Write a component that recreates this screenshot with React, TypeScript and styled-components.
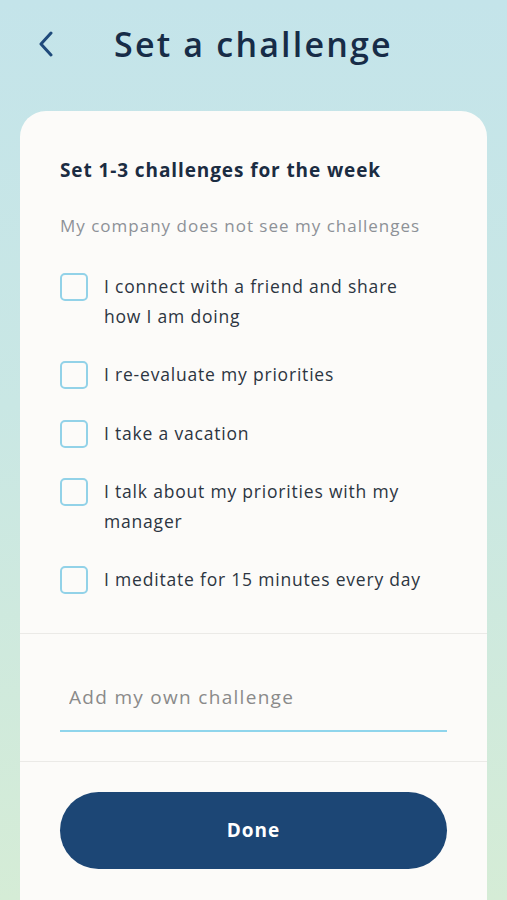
import React from 'react';
import styled, { createGlobalStyle } from 'styled-components';

const GlobalStyle = createGlobalStyle`
  html, body {
    margin: 0;
    padding: 0;
  }
  body {
    font-family: "Open Sans", "Noto Sans", sans-serif;
    -webkit-font-smoothing: antialiased;
  }
`;

const Screen = styled.div`
  width: 507px;
  height: 900px;
  overflow: hidden;
  display: flex;
  flex-direction: column;
  background: linear-gradient(180deg, #c4e4ea 0%, #c9e7e4 45%, #d5ecd6 100%);
`;

const Header = styled.header`
  height: 111px;
  flex-shrink: 0;
  display: flex;
  align-items: flex-start;
  padding: 24px 0 0 34px;
  box-sizing: border-box;
`;

const BackButton = styled.button`
  width: 24px;
  height: 40px;
  padding: 0;
  border: none;
  background: none;
  display: flex;
  align-items: center;
  justify-content: center;
  cursor: pointer;
`;

const Title = styled.h1`
  margin: 0 0 0 56px;
  font-size: 34px;
  line-height: 40px;
  font-weight: 600;
  color: #172c47;
  letter-spacing: 2.2px;
`;

const Card = styled.main`
  flex: 1;
  margin: 0 20px;
  background: #fcfbf9;
  border-radius: 26px 26px 0 0;
  display: flex;
  flex-direction: column;
`;

const Section = styled.section`
  padding: 0 40px;
`;

const Intro = styled(Section)`
  padding-top: 47px;
  padding-bottom: 38px;
  border-bottom: 1.5px solid #ebeae7;
`;

const Heading = styled.h2`
  margin: 0;
  font-size: 19px;
  line-height: 24px;
  font-weight: 700;
  color: #1b2c42;
  letter-spacing: 0.9px;
`;

const Note = styled.p`
  margin: 33px 0 0;
  font-size: 17px;
  line-height: 22px;
  color: #8d9197;
  letter-spacing: 1px;
`;

const List = styled.ul`
  list-style: none;
  margin: 36px 0 0;
  padding: 0;
  display: flex;
  flex-direction: column;
  gap: 30px;
`;

const Item = styled.li`
  display: flex;
  align-items: flex-start;
  gap: 16px;
`;

const Box = styled.span`
  width: 28px;
  height: 28px;
  flex-shrink: 0;
  box-sizing: border-box;
  border: 2px solid #92d2e8;
  border-radius: 5px;
`;

const Label = styled.span`
  font-size: 17.5px;
  line-height: 29.5px;
  color: #2c3541;
  margin-top: -1px;
  padding-right: 24px;
  letter-spacing: 0.8px;
`;

const InputArea = styled(Section)`
  padding-top: 51px;
  padding-bottom: 29px;
  border-bottom: 1.5px solid #ebeae7;
`;

const Input = styled.input`
  width: 100%;
  box-sizing: border-box;
  border: none;
  border-bottom: 2px solid #8fd5ec;
  background: transparent;
  padding: 0 9px 21px;
  font-family: inherit;
  font-size: 19px;
  line-height: 24px;
  color: #2c3541;
  outline: none;
  letter-spacing: 1.3px;

  &::placeholder {
    color: #8a8a8a;
  }
`;

const Footer = styled(Section)`
  padding-top: 30px;
`;

const DoneButton = styled.button`
  width: 100%;
  height: 77px;
  border: none;
  border-radius: 39px;
  background: #1c4675;
  color: #ffffff;
  font-family: inherit;
  font-size: 19px;
  font-weight: 700;
  letter-spacing: 1px;
  cursor: pointer;
`;

const challenges = [
  'I connect with a friend and share how I am doing',
  'I re-evaluate my priorities',
  'I take a vacation',
  'I talk about my priorities with my manager',
  'I meditate for 15 minutes every day',
];

const App = () => {
  return (
    <>
      <GlobalStyle />
      <Screen>
        <Header>
          <BackButton aria-label="Back">
            <svg width="16" height="26" viewBox="0 0 16 26" fill="none">
              <path d="M13 2 L3 13 L13 24" stroke="#1f4a7b" strokeWidth="3" strokeLinecap="round" strokeLinejoin="round" />
            </svg>
          </BackButton>
          <Title>Set a challenge</Title>
        </Header>
        <Card>
          <Intro>
            <Heading>Set 1-3 challenges for the week</Heading>
            <Note>My company does not see my challenges</Note>
            <List>
              {challenges.map((c) => (
                <Item key={c}>
                  <Box />
                  <Label>{c}</Label>
                </Item>
              ))}
            </List>
          </Intro>
          <InputArea>
            <Input placeholder="Add my own challenge" />
          </InputArea>
          <Footer>
            <DoneButton>Done</DoneButton>
          </Footer>
        </Card>
      </Screen>
    </>
  );
};

export default App;
